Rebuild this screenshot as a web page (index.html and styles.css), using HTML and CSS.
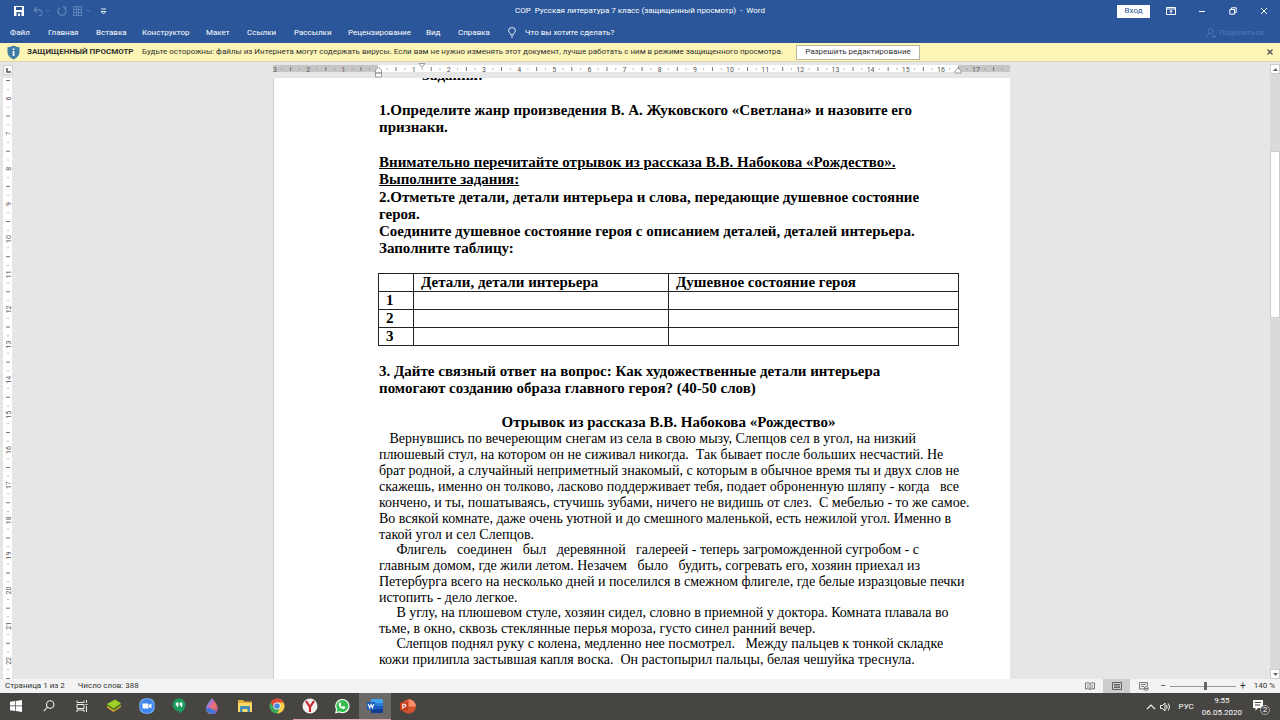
FILE: index.html
```html
<!DOCTYPE html>
<html lang="ru">
<head>
<meta charset="utf-8">
<title>СОР Русская литература 7 класс - Word</title>
<link rel="stylesheet" href="styles.css">
</head>
<body>
<header class="head">
  <div class="titlebar">
    <div class="quick">
      <button class="icon-btn" aria-label="Сохранить"><svg width="10" height="10" viewBox="0 0 10 10"><path d="M0 0h10v10H0z" fill="#fff"/><path d="M2 1h6v3H2zM2.500 6h5v4h-5z" fill="#2b579a"/><path d="M4 7.500h2V10H4z" fill="#fff"/></svg></button>
      <button class="icon-btn undo" aria-label="Отменить"><svg width="18" height="10" viewBox="0 0 18 10" fill="none" stroke="#5d80b8"><path d="M4 1L1 4l3 3M1 4h5q3 0 3 3t-3 2.500" stroke-width="1.300"/><path d="M13 4l1.500 1.500L16 4"/></svg></button>
      <button class="icon-btn redo" aria-label="Повторить"><svg width="10" height="10" viewBox="0 0 10 10" fill="none" stroke="#5d80b8" stroke-width="1.300"><path d="M7.500 2.200A4 4 0 1 1 3 1.800M5.500.8h3v3"/></svg></button>
      <button class="icon-btn grid" aria-label="Таблица"><svg width="18" height="10" viewBox="0 0 18 10" fill="none" stroke="#5d80b8"><path d="M.5.5h8v9h-8zM3.500.5v9M5.500.5v9M.5 3.500h8M.5 6.500h8M14 4l1.500 1.500L17 4"/></svg></button>
      <button class="icon-btn more" aria-label="Настройка панели"><svg width="7" height="7" viewBox="0 0 7 7" fill="none" stroke="#dfe7f3"><path d="M1 1h5M1 3.500L3.500 6 6 3.500z"/></svg></button>
    </div>
    <div class="doc-name">СОР&nbsp; Русская литература 7 класс (защищенный просмотр)&nbsp; -&nbsp; Word</div>
    <div class="window-tools">
      <button class="login">Вход</button>
      <button class="win" aria-label="Параметры ленты"><svg width="10" height="8" viewBox="0 0 10 8" fill="none" stroke="#fff"><path d="M.5.500h9v7h-9zM.5 2h9M5 6.500V3.500M3.500 5L5 3.500 6.500 5"/></svg></button>
      <button class="win" aria-label="Свернуть"><svg width="8" height="8" viewBox="0 0 8 8"><path d="M1 4.500h6" stroke="#fff"/></svg></button>
      <button class="win" aria-label="Восстановить"><svg width="8" height="8" viewBox="0 0 8 8" fill="none" stroke="#fff"><path d="M.8 2.500h4.700v4.700H.8zM2.500 2V.8h4.700v4.700H6"/></svg></button>
      <button class="win" aria-label="Закрыть"><svg width="8" height="8" viewBox="0 0 8 8"><path d="M1 1l6 6M7 1L1 7" stroke="#fff"/></svg></button>
    </div>
  </div>
  <nav class="tabs">
    <a href="#">Файл</a><a href="#">Главная</a><a href="#">Вставка</a><a href="#">Конструктор</a><a href="#">Макет</a><a href="#">Ссылки</a><a href="#">Рассылки</a><a href="#">Рецензирование</a><a href="#">Вид</a><a href="#">Справка</a>
    <svg width="8" height="11" viewBox="0 0 8 11" fill="none" stroke="#fff" stroke-width=".9"><path d="M2.800 8V7Q.6 5.500.6 3.700a3.400 3.200 0 0 1 6.800 0Q7.400 5.500 5.200 7v1zM3 10h2"/></svg>
    <a href="#">Что вы хотите сделать?</a>
    <button class="share" disabled><svg width="10" height="10" viewBox="0 0 10 10" fill="none" stroke="#5478b2"><circle cx="4.500" cy="3.200" r="2.500"/><path d="M.5 9.500Q1 6 4 5.700M6 8.500h4M8 6.500v3.500"/></svg>Поделиться</button>
  </nav>
</header>

<section class="notice">
  <svg width="13" height="15" viewBox="0 0 13 15"><path d="M6.500.5Q9 2.300 12.500 2.300V7q0 5-6 7.500Q.5 12 .5 7V2.300Q4 2.300 6.500.5z" fill="#3f7da8"/><path d="M5.700 3.500h1.700v1.600H5.700zM5.700 6h1.700v5H5.700z" fill="#fff"/></svg>
  <strong>ЗАЩИЩЕННЫЙ ПРОСМОТР</strong>
  <p>Будьте осторожны: файлы из Интернета могут содержать вирусы. Если вам не нужно изменять этот документ, лучше работать с ним в режиме защищенного просмотра.</p>
  <button class="enable">Разрешить редактирование</button>
  <button class="dismiss" aria-label="Закрыть сообщение"><svg width="6" height="6" viewBox="0 0 6 6"><path d="M.5.5l5 5M5.500.5l-5 5" stroke="#555" stroke-width="1.300"/></svg></button>
</section>

<main class="work">
  <div class="side">
    <button class="corner" aria-label="Табуляция"><svg width="5" height="5" viewBox="0 0 5 5"><path d="M1 0v4h4" fill="none" stroke="#555" stroke-width="1.500"/></svg></button>
    <svg class="ruler-v" id="ruler-v" aria-hidden="true"></svg>
  </div>
  <div class="desk">
    <svg class="ruler-h" id="ruler-h" viewBox="0 0 737 16" aria-hidden="true"></svg>
    <article class="page">
      <p class="task first">Задания:</p>
      <p class="task open-task">1.Определите жанр произведения В. А. Жуковского «Светлана» и назовите его
признаки.</p>
      <p class="task lined">Внимательно перечитайте отрывок из рассказа В.В. Набокова «Рождество».
Выполните задания:</p>
      <p class="task tight">2.Отметьте детали, детали интерьера и слова, передающие душевное состояние
героя.</p>
      <p class="task near">Соедините душевное состояние героя с описанием деталей, деталей интерьера.
Заполните таблицу:</p>
      <table class="answers">
        <colgroup><col class="c-num"><col class="c-detail"><col></colgroup>
        <thead><tr><th></th><th>Детали, детали интерьера</th><th>Душевное состояние героя</th></tr></thead>
        <tbody>
          <tr><th>1</th><td></td><td></td></tr>
          <tr><th>2</th><td></td><td></td></tr>
          <tr><th>3</th><td></td><td></td></tr>
        </tbody>
      </table>
      <p class="task">3. Дайте связный ответ на вопрос: Как художественные детали интерьера
помогают созданию образа главного героя? (40-50 слов)</p>
      <h1 class="task story-title">Отрывок из рассказа В.В. Набокова «Рождество»</h1>
      <p class="story">   Вернувшись по вечереющим снегам из села в свою мызу, Слепцов сел в угол, на низкий
плюшевый стул, на котором он не сиживал никогда.  Так бывает после больших несчастий. Не
брат родной, а случайный неприметный знакомый, с которым в обычное время ты и двух слов не
скажешь, именно он толково, ласково поддерживает тебя, подает оброненную шляпу - когда   все
кончено, и ты, пошатываясь, стучишь зубами, ничего не видишь от слез.  С мебелью - то же самое.
Во всякой комнате, даже очень уютной и до смешного маленькой, есть нежилой угол. Именно в
такой угол и сел Слепцов.</p>
      <p class="story">     Флигель   соединен   был   деревянной   галереей - теперь загроможденной сугробом - с
главным домом, где жили летом. Незачем   было   будить, согревать его, хозяин приехал из
Петербурга всего на несколько дней и поселился в смежном флигеле, где белые изразцовые печки
истопить - дело легкое.</p>
      <p class="story">     В углу, на плюшевом стуле, хозяин сидел, словно в приемной у доктора. Комната плавала во
тьме, в окно, сквозь стеклянные перья мороза, густо синел ранний вечер.</p>
      <p class="story">     Слепцов поднял руку с колена, медленно нее посмотрел.   Между пальцев к тонкой складке
кожи прилипла застывшая капля воска.  Он растопырил пальцы, белая чешуйка треснула.</p>
    </article>
  </div>
  <div class="scroll">
    <button class="arrow" aria-label="Вверх"><svg width="5" height="3" viewBox="0 0 5 3"><path d="M0 3L2.500 0 5 3z" fill="#666"/></svg></button>
    <div class="track"><div class="thumb"></div></div>
    <button class="arrow" aria-label="Вниз"><svg width="5" height="3" viewBox="0 0 5 3"><path d="M0 0l2.500 3L5 0z" fill="#666"/></svg></button>
  </div>
</main>

<footer class="status">
  <span class="pages">Страница 1 из 2</span><span>Число слов: 388</span>
  <div class="views">
    <button aria-label="Режим чтения"><svg width="10" height="8" viewBox="0 0 10 8" fill="none" stroke="#666" stroke-width=".9"><path d="M.5 1Q3 0 5 1.500 7 0 9.500 1v6Q7 6 5 7.500 3 6 .5 7zM5 1.500v6M2 3h1.500M2 5h1.500M6.500 3H8M6.500 5H8"/></svg></button>
    <button class="on" aria-label="Разметка страницы"><svg width="10" height="8" viewBox="0 0 10 8" fill="none" stroke="#555" stroke-width=".9"><path d="M.5.5h9v7h-9zM2 2.500h6M2 4h6M2 5.500h6"/></svg></button>
    <button aria-label="Веб-документ"><svg width="10" height="9" viewBox="0 0 10 9" fill="none" stroke="#666" stroke-width=".9"><path d="M5 7H.5V.5h8V4M2 2.500h5M2 4.500h3"/><circle cx="7.200" cy="6.500" r="2"/><path d="M5.500 6.500h3.500"/></svg></button>
  </div>
  <label class="zoom"><span>−</span><input type="range" min="0" max="100" value="54" aria-label="Масштаб"><span>+</span></label>
  <span class="percent">140 %</span>
</footer>

<nav class="taskbar">
  <div class="apps">
    <button aria-label="Пуск"><svg width="12" height="12" viewBox="0 0 12 12" fill="#fff"><path d="M0 1.700L5 1v4.600H0zM5.700.9L12 0v5.600H5.700zM0 6.300h5V11l-5-.7zM5.700 6.300H12V12l-6.300-.9z"/></svg></button>
    <button aria-label="Поиск"><svg width="12" height="12" viewBox="0 0 12 12" fill="none" stroke="#eee" stroke-width="1.100"><circle cx="7.200" cy="4.500" r="3.700"/><path d="M4.600 7.200L.8 11.200"/></svg></button>
    <button aria-label="Представление задач"><svg width="12" height="12" viewBox="0 0 12 12" fill="none" stroke="#eee"><path d="M1 .5v2h7v-2M1 4.500h7v4H1zM1 12v-2h7v2M10.500 0v3M10.500 6v6M9.500 4.500h2"/></svg></button>
    <button aria-label="BlueStacks"><svg width="16" height="14" viewBox="0 0 16 14"><path d="M1 8.500l6.500 4.500L15 8V6L1 6.500z" fill="#d9a52c"/><path d="M1 6.700l7 4.500 7-4.700-.5-2L1 5z" fill="#487a20"/><path d="M1 5l8-4.500 6 3.800-7.500 4.900z" fill="#a0cf28"/></svg></button>
    <button aria-label="Zoom"><svg width="16" height="16" viewBox="0 0 16 16"><rect x=".3" y=".3" width="15.400" height="15.400" rx="6" fill="#76a9f5"/><circle cx="8" cy="8" r="6.900" fill="#3f86ee"/><path d="M3.500 5.500h5q1 0 1 1v4h-5q-1 0-1-1zM10 7l2.500-1.500v5L10 9z" fill="#fff"/></svg></button>
    <button aria-label="Hangouts"><svg width="14" height="16" viewBox="0 0 14 16"><path d="M7 .3A6.500 6.500 0 0 1 13.500 7q0 5-6.300 8.500v-2.200A6.500 6.500 0 1 1 7 .3z" fill="#189b5b"/><path d="M3.800 4.500h2.700v3Q6.500 9 5 9.500V7.500H3.800zM7.700 4.500h2.700v3Q10.400 9 8.900 9.500V7.500H7.700z" fill="#fff"/></svg></button>
    <button aria-label="Paint 3D"><svg width="14" height="16" viewBox="0 0 14 16"><defs><linearGradient id="drop" x1="0" y1="0" x2="1" y2="1"><stop offset=".15" stop-color="#38a9e8"/><stop offset=".4" stop-color="#d566b4"/><stop offset=".6" stop-color="#f1765e"/><stop offset="1" stop-color="#6145c9"/></linearGradient></defs><path d="M7 0q6 7 6 10.500a5.500 5.500 0 0 1-12 0Q1 7 7 0z" fill="url(#drop)"/><path d="M1.100 10Q6 9 11 14q-2 2-4 2-6-1-5.900-6z" fill="#3f76dc"/></svg></button>
    <button aria-label="Проводник"><svg width="16" height="14" viewBox="0 0 16 14"><path d="M1 1h5l1.500 1.500H15V12H1z" fill="#e5ad35"/><path d="M1 4h14v9H1z" fill="#fbd967"/><path d="M3 8q0-1 1-1h8q1 0 1 1v5h-2.500v-3h-5v3H3z" fill="#418cb9"/></svg></button>
    <button aria-label="Chrome"><svg width="16" height="16" viewBox="0 0 16 16"><path d="M8 8V.5A7.500 7.500 0 0 1 14.500 4.250 7.500 7.500 0 0 1 8 15.500z" fill="#f7ce44"/><path d="M8 4.500h6.600L14.500 4.250A7.500 7.500 0 0 0 1.500 4.250L5 9z" fill="#df493b"/><path d="M1.500 4.250A7.500 7.500 0 0 0 8 15.500L11 10 5 9.500z" fill="#3da75a"/><circle cx="8" cy="8" r="3.600" fill="#fff"/><circle cx="8" cy="8" r="2.800" fill="#4b86df"/></svg></button>
    <button class="open" aria-label="Яндекс Браузер"><svg width="16" height="16" viewBox="0 0 16 16"><circle cx="8" cy="8" r="7.500" fill="#f3eeee"/><path d="M4 3l4 6 4-6M8 8.500V14" fill="none" stroke="#c8262f" stroke-width="2.200"/></svg></button>
    <button class="open" aria-label="WhatsApp"><svg width="16" height="16" viewBox="0 0 16 16"><path d="M1 15.500l1-4A7.200 7.200 0 1 1 5 14.500z" fill="#f4fff6"/><path d="M2.500 14l.8-2.700A6 6 0 1 1 5.300 13.200z" fill="#36bd50"/><path d="M5.200 4.500l1-.4 1 2-.7.9q.8 1.500 2.200 2.100l.9-1 2 1q-.3 2-2.200 2Q5 10.500 4.700 6q0-1 .5-1.500z" fill="#fff"/></svg></button>
    <button class="open active" aria-label="Word"><svg width="16" height="14" viewBox="0 0 16 14"><path d="M4 0h11q1 0 1 1v3H4z" fill="#41a5ee"/><path d="M4 4h12v3H4z" fill="#2b7cd3"/><path d="M4 7h12v3H4z" fill="#185abd"/><path d="M4 10h12v3q0 1-1 1H4z" fill="#103f91"/><path d="M0 3h8v8H0z" fill="#185abd"/><path d="M1.300 5l1.300 4L4 5.500 5.400 9l1.300-4" fill="none" stroke="#fff" stroke-width="1.100"/></svg></button>
    <button aria-label="PowerPoint"><svg width="16" height="15" viewBox="0 0 16 15"><circle cx="8.700" cy="7.500" r="7.200" fill="#d35230"/><path d="M8.700.3a7.200 7.200 0 0 1 7.200 7.200H8.700z" fill="#ff8f6b"/><path d="M0 3.500h8v8H0z" fill="#c43e1c"/><path d="M2.800 10V5.200h1.700q1.400 0 1.400 1.400T4.500 8H3" fill="none" stroke="#fff" stroke-width="1.100"/></svg></button>
  </div>
  <div class="tray">
    <svg width="10" height="6" viewBox="0 0 10 6"><path d="M1 5l4-4 4 4" fill="none" stroke="#eee" stroke-width="1.200"/></svg>
    <svg width="11" height="10" viewBox="0 0 11 10" fill="none" stroke="#eee"><path d="M.5 3.500h2L5 1v8L2.500 6.500h-2zM6.500 3q1.300 2 0 4M8.300 1.500q2.500 3.500 0 7"/></svg>
    <span class="lang">РУС</span>
    <div class="clock"><time>9:55</time><time>06.05.2020</time></div>
    <button class="alerts" aria-label="Уведомления"><svg width="18" height="16" viewBox="0 0 18 16"><path d="M1 1h10v8H6l-2.500 2.500V9H1z" fill="#fff"/><path d="M3 3.500h6M3 6h5" stroke="#474542"/></svg><b>2</b></button>
  </div>
</nav>
<script src="rulers.js"></script>
</body>
</html>
```

FILE: styles.css
```css
* { box-sizing: border-box; }
body {
  margin: 0;
  height: 100vh;
  display: flex;
  flex-direction: column;
  overflow: hidden;
  font-family: Roboto, "Noto Sans", sans-serif;
  font-size: 8px;
  line-height: 12px;
  color: #333;
}
button { font: inherit; color: inherit; border: 0; padding: 0; background: none; display: flex; align-items: center; justify-content: center; }
a { color: inherit; text-decoration: none; }
svg { display: block; flex: none; }
p, h1 { margin: 0; }

.head { background: #2b579a; color: #fff; }
.titlebar { display: grid; grid-template-columns: 1fr auto 1fr; align-items: center; height: 22px; }
.quick { display: flex; align-items: center; padding-left: 14px; gap: 9px; }
.redo { margin-left: -3px; }
.grid { margin-left: -3px; }
.doc-name { white-space: nowrap; }
.window-tools { display: flex; justify-content: flex-end; align-items: center; padding-right: 1px; }
.login { background: #fff; color: #2b579a; width: 33px; height: 13px; margin-right: 5px; }
.win { width: 31px; height: 20px; }
.tabs {
  display: grid;
  grid-template-columns: 38px 48px 46px 64px 41px 47px 54px 78px 32px 50px 17px 1fr auto;
  align-items: center;
  height: 21px;
  padding: 0 16px 0 10px;
  white-space: nowrap;
}
.share { color: #5478b2; gap: 3px; }

.notice {
  display: grid;
  grid-template-columns: 20px 115px 654px 124px 1fr;
  align-items: center;
  height: 19px;
  padding: 0 7px;
  background: #fcf5b6;
  border-bottom: 1px solid #d9d5b0;
  white-space: nowrap;
}
.enable { height: 15px; background: #fff; border: 1px solid #bbb794; }
.dismiss { justify-self: end; }

.work { flex: 1; min-height: 0; display: flex; background: #e6e6e6; }
.side { width: 13px; display: flex; flex-direction: column; }
.corner { width: 10px; height: 10px; margin: 3px 0 3px 3px; background: #fafafa; border: 1px solid #d0d0d0; }
.ruler-v { flex: 1; min-height: 0; width: 9px; margin-left: 3px; background: #fff; }
.desk { flex: 1; min-width: 0; display: flex; flex-direction: column; align-items: center; }
.ruler-h { width: 737px; height: 16px; }
.ruler-h text, .ruler-v text { font-size: 7px; fill: #555; text-anchor: middle; }
.page {
  flex: 1;
  min-height: 0;
  width: 737px;
  padding: 0 52px 0 105px;
  overflow: hidden;
  background: #fff;
  border-left: 1px solid #cfcfcf;
  color: #000;
  font-family: "Liberation Serif", "Times New Roman", serif;
}
.task { font-size: 15px; line-height: 17px; font-weight: bold; white-space: pre; margin-bottom: 17px; }
.first { margin: -11px 0 18px 43px; }
.open-task { margin-bottom: 18px; }
.lined { text-decoration: underline; margin-bottom: 1px; }
.tight { margin-bottom: 0; }
.near { margin-bottom: 16px; }
.answers { width: 581px; margin: 0 0 17px -1px; border-collapse: collapse; table-layout: fixed; font-size: 15px; line-height: 17px; }
.answers th, .answers td { height: 18px; padding: 0 0 0 7px; border: 1px solid #222; text-align: left; }
.c-num { width: 35px; }
.c-detail { width: 255px; }
.story-title { text-align: center; margin-bottom: 0; }
.story { font-size: 14px; line-height: 16px; white-space: pre; margin-bottom: -1px; }

.scroll { width: 10px; display: flex; flex-direction: column; padding: 2px 0 0; }
.arrow { height: 10px; background: #fff; border: 1px solid #ccc; }
.track { flex: 1; background: #dadada; padding-top: 77px; }
.thumb { height: 167px; background: #fff; border: 1px solid #ccc; }

.status { display: flex; align-items: center; height: 14px; padding-left: 5px; background: #f3f3f3; white-space: nowrap; }
.pages { margin-right: 13px; }
.views { display: flex; margin-left: auto; height: 14px; }
.views button { width: 27px; }
.views .on { background: #cdcdcd; }
.zoom { display: flex; align-items: center; gap: 4px; margin: 0 8px 0 3px; font-size: 10px; }
.zoom input { appearance: none; width: 66px; height: 1px; margin: 0; background: #999; }
.zoom input::-webkit-slider-thumb { appearance: none; width: 3px; height: 8px; background: #666; }
.percent { margin-right: 5px; }

.taskbar { display: flex; justify-content: space-between; height: 27px; background: #474542; color: #fff; }
.apps { display: flex; width: 424px; }
.apps button { flex: 1; border-bottom: 1px solid transparent; }
.apps .open { border-color: #e0a6ab; }
.apps .active { background: #6c6a68; }
.tray { display: flex; align-items: center; gap: 4px; padding-right: 10px; }
.lang { margin: 0 4px; }
.clock { display: flex; flex-direction: column; align-items: center; }
.alerts { position: relative; margin-left: 6px; }
.alerts b { position: absolute; right: 0; bottom: 0; width: 10px; height: 10px; border-radius: 50%; border: 1px solid #aaa; background: #474542; line-height: 8px; font-weight: normal; }
```

FILE: rulers.js
```js
const CM = 35.15;

function mark(x, y, w, h) {
  return `<rect x="${x - w / 2}" y="${y - h / 2}" width="${w}" height="${h}" fill="#777"/>`;
}

let across = '<rect y="3" width="737" height="7" fill="#c6c6c6"/><rect x="105" y="3" width="580" height="7" fill="#fff"/>';
for (let n = -3; n <= 17; n++) {
  const x = 105.5 + n * CM;
  if (n !== 0) across += `<text x="${Math.max(x, 2)}" y="9.500">${Math.abs(n)}</text>`;
  across += mark(x + CM / 4, 7, 1, 1) + mark(x + CM / 2, 7, 1, 4) + mark(x + CM * 3 / 4, 7, 1, 1);
}
const pointer = 'fill="#fff" stroke="#888" stroke-width=".8"';
across += `<path d="M102.500 11v-3l3-3 3 3v3zM102.500 11h6v4h-6z" ${pointer}/>`;
across += `<path d="M146 1.500h6l-3 4z" ${pointer}/><path d="M682 11v-2l3-3 3 3v2z" ${pointer}/>`;
document.getElementById('ruler-h').innerHTML = across;

const side = document.getElementById('ruler-v');
const length = side.getBoundingClientRect().height;
let down = mark(5, 2.500, 4, 1) + mark(5, 11.500, 1, 1);
for (let n = 6, y = 20.5; y < length - 6; n++, y += CM) {
  down += `<text transform="translate(7.500 ${y}) rotate(-90)">${n}</text>`;
  down += mark(5, y + CM / 4, 1, 1) + mark(5, y + CM / 2, 4, 1) + mark(5, y + CM * 3 / 4, 1, 1);
}
side.innerHTML = down;
```
